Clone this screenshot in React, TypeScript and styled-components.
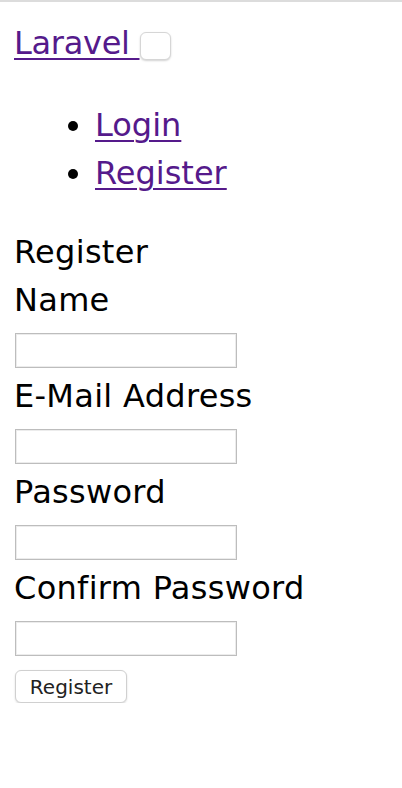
import React from "react";
import styled, { createGlobalStyle } from "styled-components";

const Global = createGlobalStyle`
  html, body { margin: 0; padding: 0; background: #fff; }
  body { font-family: "DejaVu Sans", "Noto Sans", sans-serif; color: #000; }
`;

const Page = styled.div`
  border-top: 2px solid #dcdcdc;
  padding: 0 14px;
  font-size: 32px;
  letter-spacing: 0.3px;
  line-height: 48px;
`;

const Nav = styled.nav`
  display: flex;
  flex-direction: column;
  padding-top: 17px;
`;

const Brand = styled.div`
  display: flex;
  align-items: flex-start;
`;

const Link = styled.a<{ $tight?: boolean }>`
  color: #551a8b;
  text-decoration: underline;
  text-decoration-thickness: 2px;
  text-underline-offset: 4px;
  white-space: pre;
  letter-spacing: ${(p) => (p.$tight ? "-0.3px" : "0")};
`;

const Toggler = styled.button`
  width: 31px;
  height: 28px;
  margin-top: 13px;
  padding: 0;
  border: 1px solid #d6d6d6;
  border-radius: 6px;
  background: #fff;
  box-shadow: 0 1px 2px rgba(0, 0, 0, 0.18);
`;

const Menu = styled.ul`
  margin: 34px 0 31px;
  padding-left: 81px;
  list-style: disc;
`;

const Form = styled.form`
  display: flex;
  flex-direction: column;
  align-items: flex-start;
`;

const Title = styled.div``;

const Label = styled.label`
  display: block;
`;

const Input = styled.input`
  box-sizing: border-box;
  width: 222px;
  height: 35px;
  margin: 9px 0 4px 1px;
  border: 1px solid #bdbdbd;
  box-shadow: inset 0 0 0 1px #ececec;
  background: #fff;
  outline: none;
`;

const Submit = styled.button`
  box-sizing: border-box;
  width: 112px;
  height: 33px;
  margin: 10px 0 0 1px;
  border: 1px solid #d0d0d0;
  border-radius: 6px;
  background: #fff;
  box-shadow: 0 1px 2px rgba(0, 0, 0, 0.15);
  font-family: "DejaVu Sans", sans-serif;
  font-size: 20px;
  letter-spacing: 0;
  line-height: 1;
  color: #222;
  padding: 0;
`;

const fields = [
  { label: "Name", type: "text" },
  { label: "E-Mail Address", type: "email" },
  { label: "Password", type: "password" },
  { label: "Confirm Password", type: "password" },
];

export default function App() {
  return (
    <Page>
      <Global />
      <Nav>
        <Brand>
          <Link href="#" $tight>Laravel </Link>
          <Toggler type="button" />
        </Brand>
        <Menu>
          <li><Link href="#">Login</Link></li>
          <li><Link href="#">Register</Link></li>
        </Menu>
      </Nav>
      <Form onSubmit={(e) => e.preventDefault()}>
        <Title>Register</Title>
        {fields.map((f) => (
          <React.Fragment key={f.label}>
            <Label>{f.label}</Label>
            <Input type={f.type} />
          </React.Fragment>
        ))}
        <Submit type="submit">Register</Submit>
      </Form>
    </Page>
  );
}
